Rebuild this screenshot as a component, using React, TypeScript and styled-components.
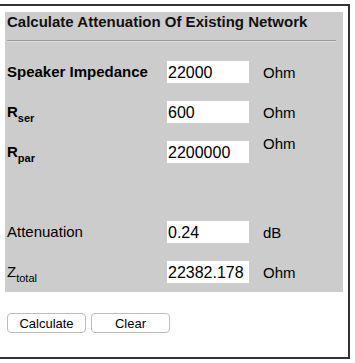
import React from "react";
import styled, { createGlobalStyle } from "styled-components";

interface FieldRow {
  label: string;
  sub?: string;
  bold?: boolean;
  value?: string;
  unit?: string;
  unitTop?: boolean;
}

const rows: FieldRow[] = [
  { label: "Speaker Impedance", bold: true, value: "22000", unit: "Ohm" },
  { label: "R", sub: "ser", bold: true, value: "600", unit: "Ohm" },
  { label: "R", sub: "par", bold: true, value: "2200000", unit: "Ohm", unitTop: true },
  { label: "" },
  { label: "Attenuation", value: "0.24", unit: "dB" },
  { label: "Z", sub: "total", value: "22382.178", unit: "Ohm" },
];

const App: React.FC = () => {
  return (
    <>
      <GlobalStyle />
      <Frame>
        <Panel>
          <Heading>Calculate Attenuation Of Existing Network</Heading>
          <Rule />
          <Rows>
            {rows.map((r, i) => (
              <Row key={i}>
                <Label $bold={!!r.bold}>
                  {r.label}
                  {r.sub && <Sub>{r.sub}</Sub>}
                </Label>
                {r.value !== undefined ? <Field defaultValue={r.value} /> : <span />}
                {r.unit ? <Unit $top={!!r.unitTop}>{r.unit}</Unit> : <span />}
              </Row>
            ))}
          </Rows>
        </Panel>
        <Buttons>
          <Button type="button">Calculate</Button>
          <Button type="button">Clear</Button>
        </Buttons>
      </Frame>
    </>
  );
};

export default App;

// ===== styled-components =====

const GlobalStyle = createGlobalStyle`
  body {
    margin: 0;
    background: #fff;
    overflow: hidden;
    font-family: "Liberation Sans", Arial, Helvetica, sans-serif;
    color: #000;
  }
`;

const Frame = styled.div`
  box-sizing: border-box;
  width: 352px;
  height: 355px;
  margin: 4px 0 0 -2px;
  border: 2px solid #333;
  padding: 6px 5px 0 5px;
`;

const Panel = styled.div`
  background: #cccccc;
  padding: 1px 7px 9px 2px;
`;

const Heading = styled.h3`
  margin: 0;
  font-size: 15px;
  line-height: 17px;
  font-weight: 700;
  color: #111;
`;

const Rule = styled.div`
  margin-top: 10px;
  height: 0;
  border-top: 1px solid #999;
  border-bottom: 1px solid #ddd;
`;

const Rows = styled.div`
  display: flex;
  flex-direction: column;
  gap: 18px;
  margin-top: 19px;
`;

const Row = styled.div`
  display: grid;
  grid-template-columns: 146px 82px auto;
  column-gap: 14px;
  align-items: center;
  height: 22px;
`;

const Label = styled.div<{ $bold: boolean }>`
  font-size: 15px;
  line-height: 17px;
  margin-top: -2px;
  font-weight: ${(p) => (p.$bold ? 700 : 400)};
  white-space: nowrap;
`;

const Sub = styled.sub`
  font-size: 11px;
  line-height: 0;
  vertical-align: -5px;
`;

const Field = styled.input`
  box-sizing: border-box;
  width: 82px;
  height: 22px;
  margin: 0;
  padding: 1px 1px 0;
  border: none;
  outline: none;
  background: #fff;
  font-family: "Liberation Sans", Arial, Helvetica, sans-serif;
  font-size: 16px;
  color: #000;
`;

const Unit = styled.div<{ $top: boolean }>`
  font-size: 15px;
  line-height: 17px;
  align-self: ${(p) => (p.$top ? "start" : "center")};
  margin-top: ${(p) => (p.$top ? "-6px" : "0")};
`;

const Buttons = styled.div`
  display: flex;
  gap: 5px;
  margin: 21px 0 0 2px;
`;

const Button = styled.button`
  box-sizing: border-box;
  width: 79px;
  height: 20px;
  padding: 0;
  background: #fff;
  border: 1px solid #bdbdbd;
  border-radius: 4px;
  font-family: "Liberation Sans", Arial, Helvetica, sans-serif;
  font-size: 13px;
  color: #000;
`;
